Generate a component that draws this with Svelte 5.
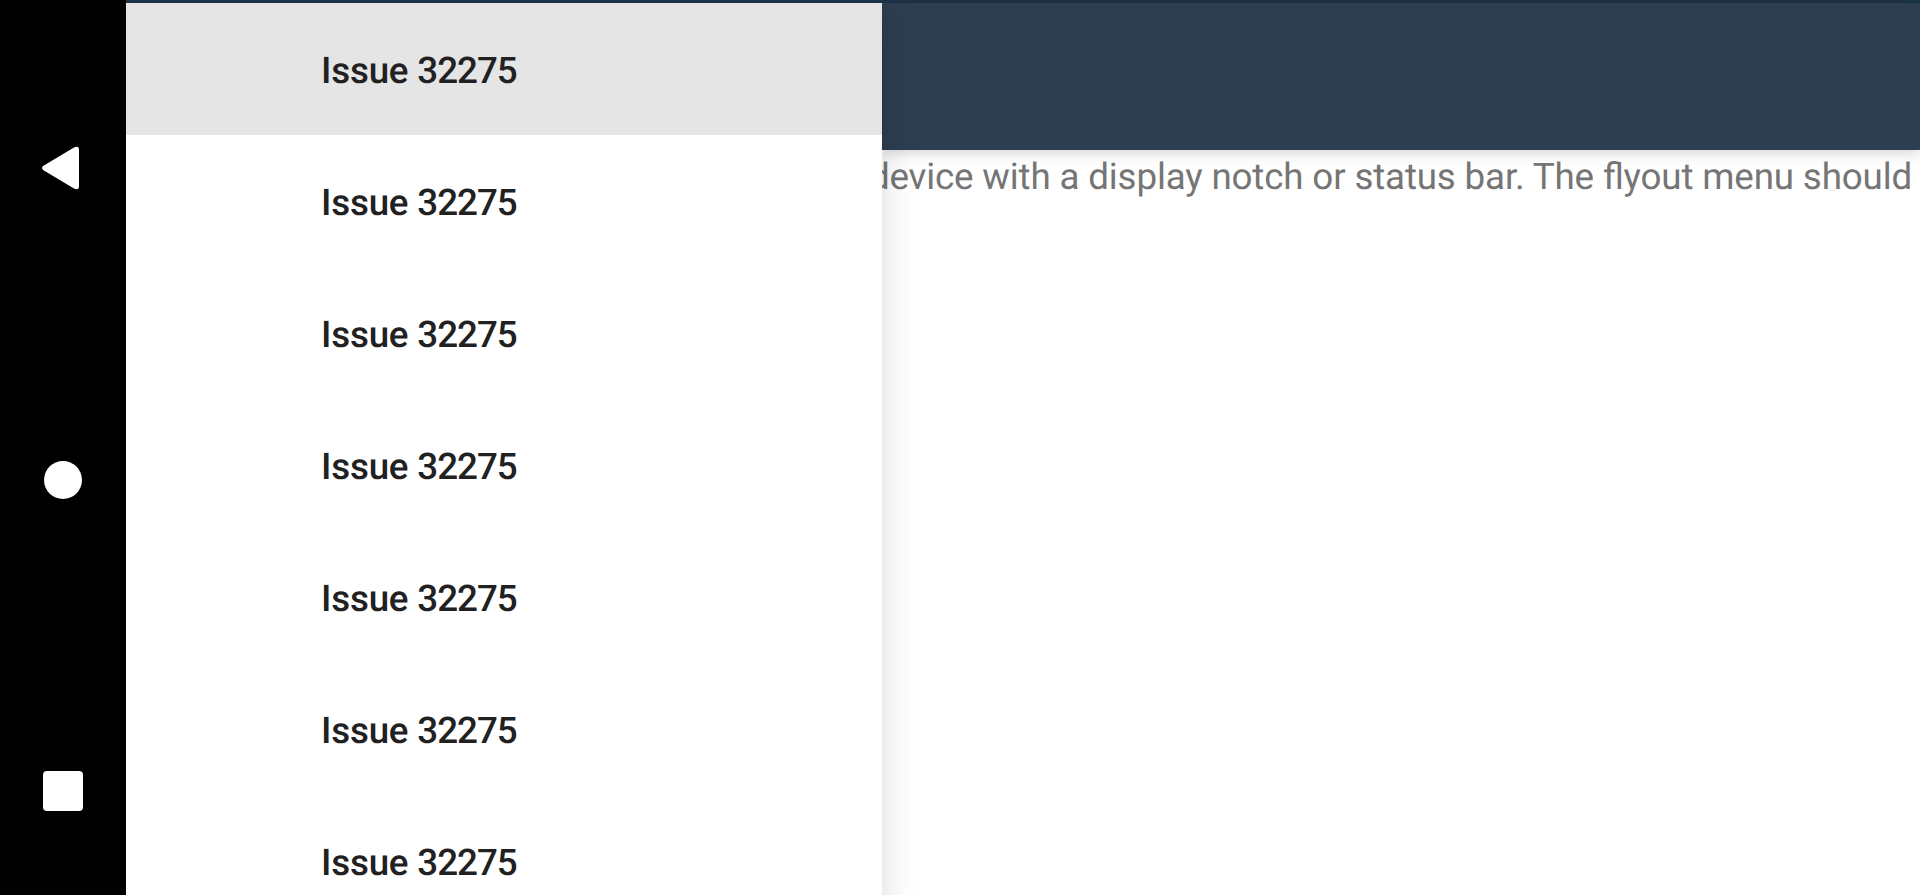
<script>
  const items = Array.from({ length: 7 }, (_, id) => ({ id, label: 'Issue', number: 32275 }));
</script>

<div class="screen">
  <nav class="system">
    <svg class="back" viewBox="0 0 126 80" width="126" height="80">
      <path d="M43.500 35.800 L73.500 17.800 Q79 15 79 20 V56 Q79 61 73.500 58.200 L43.500 40.200 Q40.500 38 43.500 35.800Z" fill="#fff" />
    </svg>
    <span class="home"></span>
    <span class="recent"></span>
  </nav>
  <div class="app">
    <div class="status"></div>
    <div class="body">
      <aside class="flyout">
        {#each items as item (item.id)}
          <div class="item" class:selected={item.id === 0}>
            <span class="title">{item.label} <span class="number">{item.number}</span></span>
          </div>
        {/each}
      </aside>
      <main>
        <header></header>
        <p>device with a display notch or status bar. The flyout menu should</p>
      </main>
    </div>
  </div>
</div>

<style>
  :global(body) { margin: 0; overflow: hidden; }
  .screen {
    display: flex;
    width: 1920px;
    height: 895px;
    overflow: hidden;
    background: #fff;
    font-family: Roboto, sans-serif;
    font-size: 36.75px;
    text-rendering: geometricPrecision;
  }
  .system {
    flex: 0 0 126px;
    display: flex;
    flex-direction: column;
    align-items: center;
    background: #000;
  }
  .back { margin-top: 130px; flex: none; }
  .home {
    flex: none;
    width: 38.500px;
    height: 38.500px;
    margin-top: 250.500px;
    border-radius: 50%;
    background: #fff;
  }
  .recent {
    flex: none;
    width: 39.500px;
    height: 39.500px;
    margin-top: 272px;
    border-radius: 4px;
    background: #fff;
  }
  .app { flex: 1; min-width: 0; display: flex; flex-direction: column; }
  .status { flex: 0 0 3px; background: #1c3349; }
  .body { flex: 1; min-height: 0; display: flex; }
  .flyout {
    position: relative;
    z-index: 1;
    flex: 0 0 756px;
    height: 924px;
    background: #fff;
    box-shadow: 0 0 34px rgba(0, 0, 0, 0.15);
    clip-path: inset(0 -60px 0 0);
  }
  .item {
    height: 132px;
    box-sizing: border-box;
    padding: 4px 0 0 195px;
    display: flex;
    align-items: center;
    font-weight: 500;
    color: #212121;
    white-space: nowrap;
  }
  .title { line-height: 44px; letter-spacing: -0.2px; }
  .number { letter-spacing: -1px; }
  .selected { background: #e5e5e5; }
  main { flex: 1; min-width: 0; }
  header {
    height: 147px;
    background: #2c3e50;
    box-shadow: 0 2px 14px rgba(0, 0, 0, 0.2);
  }
  p {
    display: flex;
    justify-content: flex-end;
    margin: 0;
    padding: 5px 8px 0 0;
    line-height: 44px;
    letter-spacing: -0.16px;
    font-feature-settings: 'liga' 1;
    color: #757575;
    white-space: nowrap;
  }
</style>
